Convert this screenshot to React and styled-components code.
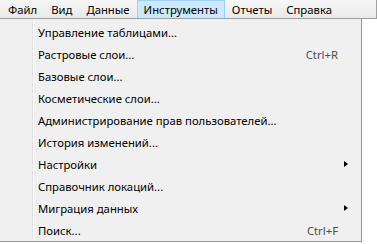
import React from "react";
import styled, { createGlobalStyle } from "styled-components";

const Global = createGlobalStyle`
  html, body { margin: 0; padding: 0; background: #ffffff; }
  body { width: 377px; height: 244px; overflow: hidden; font-family: "Noto Sans", "Open Sans", sans-serif; }
`;

const Page = styled.div`
  width: 377px;
  height: 244px;
  display: flex;
  flex-direction: column;
`;

const MenuBar = styled.div`
  height: 18px;
  display: flex;
  align-items: stretch;
  padding-left: 1px;
  background: linear-gradient(#f7f7f7, #e9e9e9);
  border-bottom: 1px solid #a0a0a0;
  border-right: 1px solid #a0a0a0;
  box-sizing: content-box;
`;

const BarItem = styled.div`
  display: flex;
  align-items: center;
  padding: 0 6px;
  font-size: 11.3px;
  color: #000;
  box-sizing: border-box;
  background: ${(p) => (p.$active ? "#cce8ff" : "transparent")};
  border: 1px solid ${(p) => (p.$active ? "#99d1ff" : "transparent")};
  border-bottom: none;
`;

const Dropdown = styled.div`
  width: 362px;
  height: 223px;
  box-sizing: border-box;
  background: #f0f0f0;
  border-right: 1px solid #979797;
  border-bottom: 1px solid #979797;
  padding: 2px 0 0 0;
  display: flex;
  flex-direction: column;
  position: relative;
`;

const Gutter = styled.div`
  position: absolute;
  left: 32px;
  top: 3px;
  bottom: 2px;
  width: 1px;
  background: #e2e2e2;
  border-right: 1px solid #ffffff;
`;

const Item = styled.div`
  height: 22px;
  display: flex;
  align-items: center;
  padding-left: 38px;
  padding-right: 23px;
  font-size: 11.3px;
  color: #000;
`;

const Label = styled.span`
  flex: 1;
`;

const Shortcut = styled.span`
  color: #4d4d4d;
`;

const Arrow = styled.span`
  width: 0;
  height: 0;
  border-top: 3.5px solid transparent;
  border-bottom: 3.5px solid transparent;
  border-left: 4px solid #000;
  margin-right: -10px;
`;

const barItems = ["Файл", "Вид", "Данные", "Инструменты", "Отчеты", "Справка"];

const items = [
  { label: "Управление таблицами..." },
  { label: "Растровые слои...", shortcut: "Ctrl+R" },
  { label: "Базовые слои..." },
  { label: "Косметические слои..." },
  { label: "Администрирование прав пользователей..." },
  { label: "История изменений..." },
  { label: "Настройки", sub: true },
  { label: "Справочник локаций..." },
  { label: "Миграция данных", sub: true },
  { label: "Поиск...", shortcut: "Ctrl+F" },
];

export default function App() {
  return (
    <Page>
      <Global />
      <MenuBar>
        {barItems.map((b) => (
          <BarItem key={b} $active={b === "Инструменты"}>
            {b}
          </BarItem>
        ))}
      </MenuBar>
      <Dropdown>
        <Gutter />
        {items.map((it) => (
          <Item key={it.label}>
            <Label>{it.label}</Label>
            {it.shortcut && <Shortcut>{it.shortcut}</Shortcut>}
            {it.sub && <Arrow />}
          </Item>
        ))}
      </Dropdown>
    </Page>
  );
}
